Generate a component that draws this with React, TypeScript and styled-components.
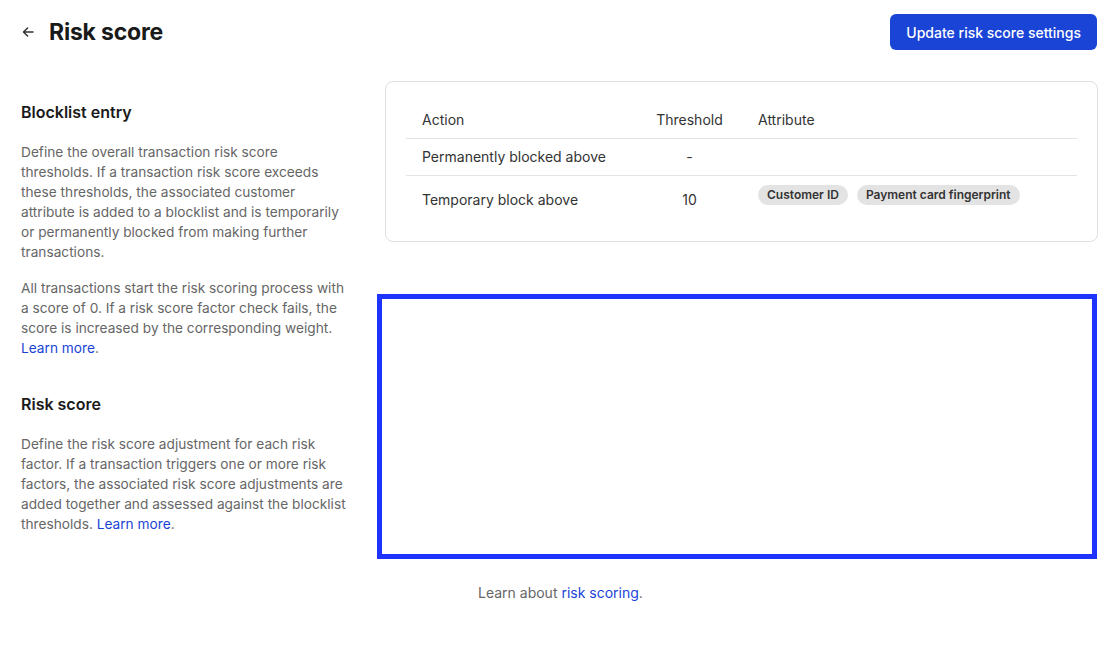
import React from "react";
import styled, { createGlobalStyle } from "styled-components";

const Global = createGlobalStyle`
  html, body { margin: 0; padding: 0; background: #fff; }
  body { font-family: Inter, "Noto Sans", "Liberation Sans", sans-serif; color: #1a1a1a; -webkit-font-smoothing: antialiased; }
  * { box-sizing: border-box; }
`;

const Page = styled.div`
  width: 1119px;
  min-height: 646px;
  padding: 14px 22px 0 21px;
`;

const Header = styled.header`
  display: flex;
  align-items: center;
  justify-content: space-between;
  height: 36px;
`;

const TitleGroup = styled.div`
  display: flex;
  align-items: center;
  gap: 15px;
`;

const BackButton = styled.button`
  border: 0;
  background: none;
  padding: 0;
  width: 13px;
  height: 13px;
  display: flex;
  align-items: center;
  justify-content: center;
  color: #333;
  cursor: pointer;
`;

const Title = styled.h1`
  margin: 0;
  font-size: 23px;
  font-weight: 700;
  letter-spacing: -0.2px;
  color: #1a1a1a;
`;

const PrimaryButton = styled.button`
  height: 36px;
  padding: 0 16px;
  border: 0;
  border-radius: 6px;
  background: #1a44d6;
  color: #fff;
  font-family: inherit;
  font-size: 14px;
  font-weight: 500;
  cursor: pointer;
`;

const Content = styled.div`
  display: grid;
  grid-template-columns: 327px 1fr;
  column-gap: 29px;
  margin-top: 31px;
  align-items: start;
`;

const Side = styled.aside`
  padding-top: 20px;
`;

const SectionHeading = styled.h2<{ $gap?: number }>`
  margin: ${(p) => p.$gap ?? 0}px 0 0;
  font-size: 16px;
  font-weight: 600;
  line-height: 22px;
  color: #1a1a1a;
`;

const Para = styled.p<{ $top: number }>`
  margin: ${(p) => p.$top}px 0 0;
  font-size: 13.7px;
  line-height: 20px;
  color: #666;
`;

const Link = styled.a`
  color: #1a44d6;
  text-decoration: none;
`;

const Main = styled.main`
  display: flex;
  flex-direction: column;
`;

const Card = styled.section`
  margin-left: 8px;
  margin-right: -1px;
  border: 1px solid #e0e0e0;
  border-radius: 8px;
  padding: 19px 20px 18px;
`;

const Table = styled.table`
  width: 100%;
  border-collapse: collapse;
  font-size: 14px;
  color: #333;
`;

const Th = styled.th<{ $w?: number; $center?: boolean }>`
  text-align: ${(p) => (p.$center ? "center" : "left")};
  width: ${(p) => (p.$w ? `${p.$w}px` : "auto")};
  font-weight: 400;
  height: 37px;
  padding: 0 16px;
  border-bottom: 1px solid #e3e3e3;
`;

const Row = styled.tr<{ $last?: boolean }>`
  border-bottom: ${(p) => (p.$last ? "none" : "1px solid #e3e3e3")};
`;

const Td = styled.td<{ $center?: boolean; $tall?: boolean }>`
  text-align: ${(p) => (p.$center ? "center" : "left")};
  height: ${(p) => (p.$tall ? 48 : 37)}px;
  padding: 0 16px;
  vertical-align: middle;
`;

const AttrTd = styled.td`
  padding: 9px 16px 0;
  vertical-align: top;
`;

const Pills = styled.div`
  display: flex;
  gap: 9px;
`;

const Pill = styled.span`
  display: inline-flex;
  align-items: center;
  height: 20px;
  padding: 0 9px;
  border-radius: 10px;
  background: #e3e3e3;
  color: #333;
  font-size: 12px;
  font-weight: 600;
`;

const Frame = styled.div`
  margin-top: 52px;
  height: 265px;
  border: 5px solid #1f33ff;
`;

const Footnote = styled.p`
  margin: 25px 0 0 101px;
  font-size: 14px;
  line-height: 18px;
  color: #666;
`;

export default function App() {
  return (
    <>
      <Global />
      <Page>
        <Header>
          <TitleGroup>
            <BackButton aria-label="Back">
              <svg width="12" height="12" viewBox="0 0 12 12" fill="none">
                <path d="M11 6H1.6M5.6 2L1.5 6l4.1 4" stroke="#333" strokeWidth="1.5" strokeLinecap="round" strokeLinejoin="round" />
              </svg>
            </BackButton>
            <Title>Risk score</Title>
          </TitleGroup>
          <PrimaryButton>Update risk score settings</PrimaryButton>
        </Header>
        <Content>
          <Side>
            <SectionHeading>Blocklist entry</SectionHeading>
            <Para $top={19}>
              Define the overall transaction risk score thresholds. If a transaction risk score exceeds these
              thresholds, the associated customer attribute is added to a blocklist and is temporarily or
              permanently blocked from making further transactions.
            </Para>
            <Para $top={16}>
              All transactions start the risk scoring process with a score of 0. If a risk score factor check
              fails, the score is increased by the corresponding weight. <Link href="#">Learn&nbsp;more</Link>.
            </Para>
            <SectionHeading $gap={35}>Risk score</SectionHeading>
            <Para $top={19}>
              Define the risk score adjustment for each risk factor. If a transaction triggers one or more risk
              factors, the associated risk score adjustments are added together and assessed against the
              blocklist thresholds. <Link href="#">Learn&nbsp;more</Link>.
            </Para>
          </Side>
          <Main>
            <Card>
              <Table>
                <thead>
                  <tr>
                    <Th $w={231}>Action</Th>
                    <Th $w={105} $center>Threshold</Th>
                    <Th>Attribute</Th>
                  </tr>
                </thead>
                <tbody>
                  <Row>
                    <Td>Permanently blocked above</Td>
                    <Td $center>-</Td>
                    <Td />
                  </Row>
                  <Row $last>
                    <Td $tall>Temporary block above</Td>
                    <Td $tall $center>10</Td>
                    <AttrTd>
                      <Pills>
                        <Pill>Customer ID</Pill>
                        <Pill>Payment card fingerprint</Pill>
                      </Pills>
                    </AttrTd>
                  </Row>
                </tbody>
              </Table>
            </Card>
            <Frame />
            <Footnote>
              Learn about <Link href="#">risk scoring</Link>.
            </Footnote>
          </Main>
        </Content>
      </Page>
    </>
  );
}
